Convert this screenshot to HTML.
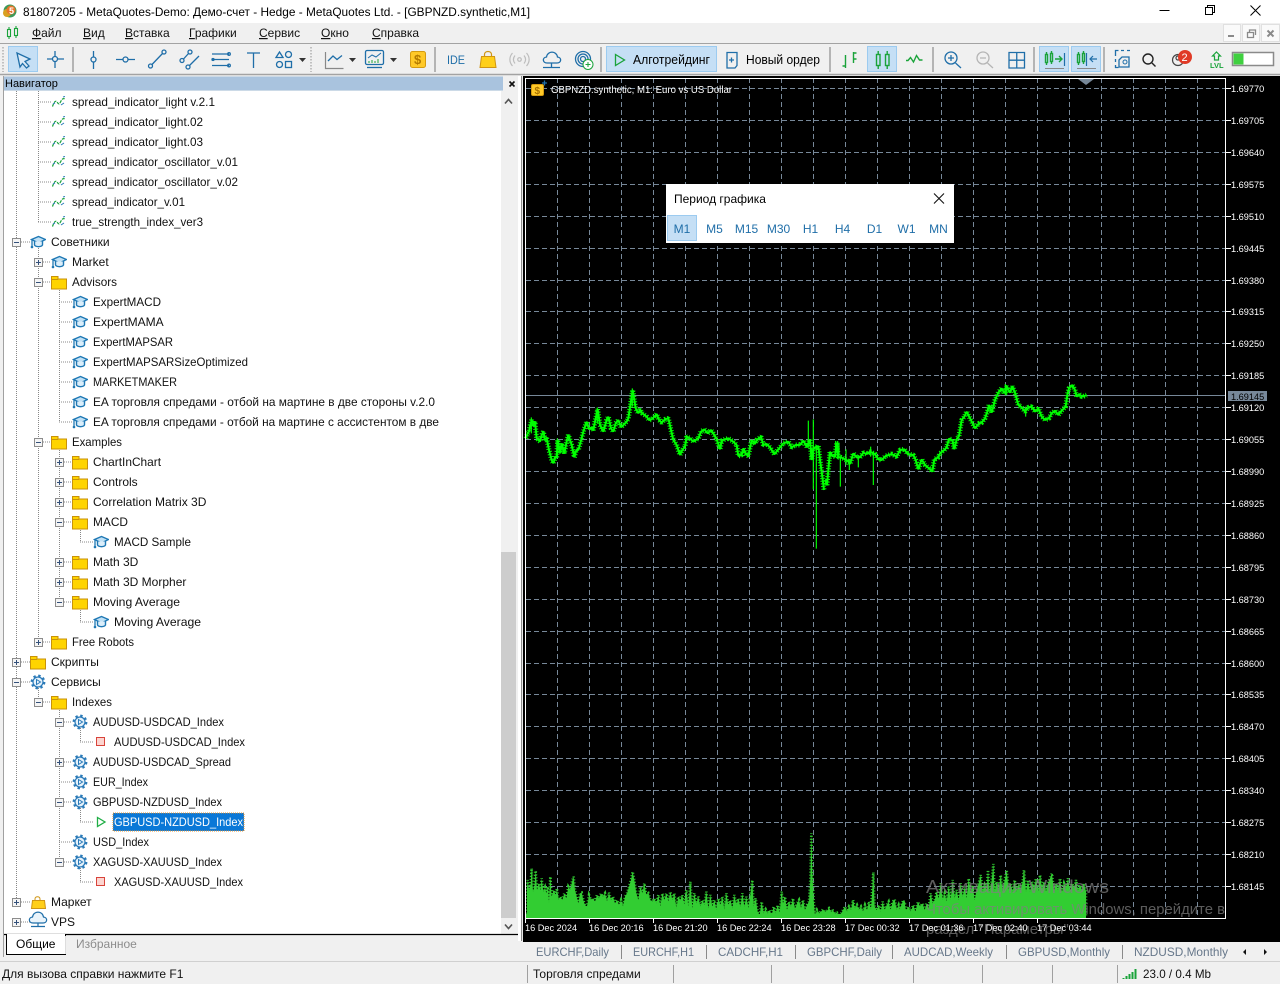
<!DOCTYPE html>
<html><head><meta charset="utf-8"><title>MetaTrader</title>
<style>
html,body{margin:0;padding:0;background:#f0f0f0;width:1280px;height:984px;overflow:hidden}
svg{display:block;font-family:"Liberation Sans","Noto Sans CJK SC",sans-serif;font-size:12px}
.b{fill:none;stroke:#1f6ea8;stroke-width:1.3}
.g{fill:none;stroke:#1aa33a;stroke-width:1.4}
.s{fill:#c5dff5;stroke:#9ccbf0}
.sep{stroke:#a0a0a0;stroke-width:1.5}
.ax text,.ax{fill:#fff;font-size:9.2px}
</style></head><body>
<svg width="1280" height="984" viewBox="0 0 1280 984" xmlns="http://www.w3.org/2000/svg">
<defs>
<symbol id="hat" viewBox="0 0 16 16" width="16" height="16">
<path d="M8.500 2.500 15.500 5.500 8.500 9 1.500 5.500z" fill="#bfe0f5" stroke="#1f78b4" stroke-width="1.400"/>
<path d="M4.500 7.500v3.500c1 2.200 7 2.200 8 0V7.500" fill="#dceefa" stroke="#1f78b4" stroke-width="1.400"/>
<path d="M2 6v6.500" stroke="#1f78b4" stroke-width="1.300"/><circle cx="2" cy="13" r="1.300" fill="#1f78b4"/>
</symbol>
<symbol id="fold" viewBox="0 0 16 15" width="16" height="15">
<path d="M.5 14V1.500h6.500v2.500h8.500V14z" fill="#ffd400" stroke="#c8920a"/><path d="M1 4.500h6" stroke="#c8920a"/>
</symbol>
<symbol id="gear" viewBox="0 0 16 16" width="16" height="16">
<circle cx="8" cy="8" r="6.300" fill="none" stroke="#2a7ab8" stroke-width="2.200" stroke-dasharray="2.400 2.550"/>
<circle cx="8" cy="8" r="5" fill="#e6f2fb" stroke="#2a7ab8" stroke-width="1.200"/>
<path d="M6.500 5.500 10.500 8 6.500 10.500z" fill="none" stroke="#2a7ab8"/>
</symbol>
<symbol id="ind" viewBox="0 0 14 12" width="14" height="12">
<path d="M.5 10.500C2 6 3.500 4 5 6S7 9 8.500 6 11 2 13 3" fill="none" stroke="#1aa33a" stroke-width="1.200" stroke-dasharray="3 1"/>
<path d="M1 8 3 7M9 9 12 7M11 1l2-.5" fill="none" stroke="#2a7ab8"/>
</symbol>
<symbol id="plus" viewBox="0 0 9 9" width="9" height="9">
<rect x=".5" y=".5" width="8" height="8" fill="#f4f4f4" stroke="#8c8c8c"/><path d="M2 4.500h5M4.500 2v5" stroke="#33507a"/>
</symbol>
<symbol id="minus" viewBox="0 0 9 9" width="9" height="9">
<rect x=".5" y=".5" width="8" height="8" fill="#f4f4f4" stroke="#8c8c8c"/><path d="M2 4.500h5" stroke="#33507a"/>
</symbol>
<symbol id="arr" viewBox="0 0 7 4" width="7" height="4"><path d="M0 0h7L3.500 4z" fill="#333"/></symbol>
<polyline id="p1" points="3,205 8,190 12,185 16,165 20,150 25,168 30,155 35,205 45,215 50,195 55,185 60,208 65,205 72,240 80,270 85,280 92,258 95,265 98,210 105,250 110,220 118,250 125,215 130,195 140,225 148,262 154,240 160,240 170,205 175,185 185,155 192,178 200,172 205,180 210,155 218,118 225,165 235,185 245,150 250,140 258,175 265,185 272,160 280,150 288,172 295,165 305,155 310,145 317,100 323,60 328,90 332,115 340,130 345,118 352,130 365,140 372,150 380,148 388,140 395,132 402,150 410,158 420,148 430,145 438,180 445,210 455,225 465,255 472,240 480,230 485,200 495,205 505,215 520,205 528,185 538,178 548,190 558,180 565,190 575,208 585,238 590,212 600,208 610,205 625,215 635,225 640,258 650,255 655,235 663,252 670,258 680,210 690,222 695,210 708,200 715,225 725,222 735,232 748,253 760,238 775,220 790,215 800,232 812,225 825,225 835,212 845,230 855,210 860,270 864,240 870,232 880,228 885,270 892,320 897,360"/>
<polyline id="p2" points="0,330 6,345 10,300 15,245 22,258 30,260 35,218 40,262 48,262 60,268 68,272 75,282 85,250 95,262 105,262 115,248 125,252 135,245 150,252 160,268 170,270 182,258 200,252 215,260 225,240 238,238 248,252 265,255 272,270 280,298 290,268 300,285 312,295 322,305 328,268 340,262 345,250 358,240 365,232 372,206 382,210 388,238 395,208 402,198 410,150 418,140 425,125 435,145 450,175 462,160 470,158 480,145 487,125 492,105 500,128 510,90 520,68 530,55 538,70 545,50 555,68 562,50 570,68 580,105 590,112 600,125 610,112 620,110 630,125 640,115 650,140 660,150 672,145 680,130 690,122 700,135 710,122 722,110 727,75 732,55 742,45 750,60 755,80 762,72 770,80 778,78 785,75"/>
</defs>

<!-- base -->
<rect width="1280" height="984" fill="#f0f0f0"/>
<rect width="1280" height="23" fill="#fff"/>

<!-- title bar -->
<circle cx="10" cy="11" r="6.500" fill="#3d9a5a"/><circle cx="7" cy="13" r="4" fill="#d9a020"/><circle cx="11" cy="10" r="4.500" fill="#e8742a"/><text x="9" y="14" font-size="9" font-weight="bold" fill="#fff">5</text>
<text x="23" y="16" textLength="507" lengthAdjust="spacingAndGlyphs">81807205 - MetaQuotes-Demo: Демо-счет - Hedge - MetaQuotes Ltd. - [GBPNZD.synthetic,M1]</text>
<path d="M1159.500 10.500h10" stroke="#000"/>
<path d="M1205.500 7.500h7v7h-7zM1207.500 7.500v-2h7v7h-2" fill="none" stroke="#000"/>
<path d="M1250.500 5.500l10 10M1260.500 5.500l-10 10" stroke="#000"/>

<!-- menu -->
<g fill="none" stroke="#1aa33a" stroke-width="1.100"><rect x="7.500" y="29.500" width="3" height="7"/><rect x="14.500" y="28.500" width="3" height="7"/><path d="M9 27v2.500M9 36.500V39M16 26v2.500M16 35.500V38"/></g>
<g fill="#111">
<text x="32" y="37"><tspan text-decoration="underline">Ф</tspan>айл</text>
<text x="83" y="37"><tspan text-decoration="underline">В</tspan>ид</text>
<text x="125" y="37"><tspan text-decoration="underline">В</tspan>ставка</text>
<text x="189" y="37"><tspan text-decoration="underline">Г</tspan>рафики</text>
<text x="259" y="37"><tspan text-decoration="underline">С</tspan>ервис</text>
<text x="321" y="37"><tspan text-decoration="underline">О</tspan>кно</text>
<text x="372" y="37"><tspan text-decoration="underline">С</tspan>правка</text>
</g>
<g fill="#fafafa" stroke="#e0e0e0"><rect x="1223.500" y="24.500" width="17" height="17"/><rect x="1242.500" y="24.500" width="17" height="17"/><rect x="1261.500" y="24.500" width="18" height="17"/></g>
<path d="M1228 36h6" stroke="#8a8a8a" stroke-width="2"/>
<path d="M1247.500 32.500h6v5h-6zM1249.500 32v-2h6v5" fill="none" stroke="#8a8a8a" stroke-width="1.300"/>
<path d="M1267.500 30.500l6 6M1273.500 30.500l-6 6" stroke="#8a8a8a" stroke-width="2"/>

<!-- toolbar -->
<path d="M0 43.500h1280" stroke="#a3a3a3"/><path d="M0 74.500h1280" stroke="#a3a3a3" stroke-width="1.500"/>
<path d="M3 47v25M311 47v25" stroke="#c0c0c0" stroke-width="2" stroke-dasharray="1.500 1.500"/>
<rect class="s" x="8.500" y="46.500" width="29" height="25"/>
<path d="M17 53 30 59 25 61.500 29 66 26.500 68 22.500 63.500 20 67z" fill="#dbeaf7" stroke="#1f6ea8" stroke-width="1.300"/>
<g class="b"><path d="M47 59h5.500M57.500 59H64M55 51v5.500M55 61.500V68"/><circle cx="55" cy="59" r="2.500"/></g>
<path class="sep" d="M73 47v25"/>
<g class="b"><path d="M93.500 51v5.500M93.500 61.500V69"/><circle cx="93.500" cy="59.500" r="2.500"/>
<path d="M116 59.500h7M128.500 59.500H135"/><circle cx="125.500" cy="59.500" r="2.500"/>
<circle cx="150.500" cy="66" r="2"/><circle cx="164" cy="52" r="2"/><path d="M152 64.500 162.500 53.500"/>
<circle cx="182" cy="60.500" r="2"/><circle cx="190" cy="52" r="2"/><circle cx="188" cy="67" r="2"/><path d="M183.500 59 188.500 53.500M189.500 65.500 199 56"/>
<path d="M212 54h17M212 59.500h17M212 65.500h17"/><circle cx="229" cy="54" r="1.300"/><circle cx="213" cy="59.500" r="1"/><circle cx="229" cy="65.500" r="1.300"/>
<path d="M247 53h13M253.500 53v15"/>
<path d="M276 57.500 279.500 52 283 57.500z"/><circle cx="288.500" cy="54.500" r="3"/><circle cx="279.500" cy="64.500" r="3"/><rect x="285.500" y="61.500" width="6" height="6"/></g>
<use href="#arr" x="299" y="58"/>
<path d="M325.500 52v16.500h18" fill="none" stroke="#888" stroke-width="1.200"/>
<path class="b" d="M328 61 333 56 337 59.500 342 55.500"/>
<use href="#arr" x="349" y="58"/>
<rect class="b" x="365.500" y="50.500" width="18" height="14" rx="1.500"/><path class="b" d="M367 67.500h15"/>
<path d="M368 58l4-3 4 2 5-4" fill="none" stroke="#1f6ea8"/><path d="M369 63v-2M372 63v-3M375 63v-2M378 63v-4" stroke="#1aa33a"/>
<use href="#arr" x="390" y="58"/>
<rect x="410.500" y="51.500" width="15" height="16" rx="2" fill="#ffc928" stroke="#d49b10"/><text x="414" y="64" font-size="13" font-weight="bold" fill="#b37a00">$</text>
<path class="sep" d="M435 47v25"/>
<text x="447" y="64" fill="#1f6ea8" font-size="12" textLength="18" lengthAdjust="spacingAndGlyphs">IDE</text>
<path d="M481.500 56.500h13l1.500 11h-16z" fill="#ffcf1a" stroke="#cf9514"/><path d="M484.500 57v-2.500c0-4 7-4 7 0V57" fill="none" stroke="#cf9514" stroke-width="1.200"/>
<g fill="none" stroke="#bdbdbd" stroke-width="1.200"><circle cx="519.500" cy="59.500" r="1.800"/><path d="M515 55.500c-2 2.500-2 5.500 0 8M524 55.500c2 2.500 2 5.500 0 8M512.500 53c-3.500 4-3.500 9 0 13M526.500 53c3.500 4 3.500 9 0 13"/></g>
<path class="b" d="M547 63c-4.500 0-5-5.500-.5-6 1-6.500 10-6.500 11 0 4.500.5 4 6-.5 6zM551.500 63v4M543 67.500h17"/>
<g class="b"><circle cx="583" cy="59" r="7.500"/><circle cx="583" cy="59" r="5"/><circle cx="583" cy="59" r="2.500"/></g><circle cx="588" cy="64.500" r="5" fill="#fff" stroke="#1aa33a"/><path d="M585.500 64.500h5M588 62v5" stroke="#1aa33a"/>
<path class="sep" d="M601 47v25"/>
<rect class="s" x="606.500" y="46.500" width="110" height="25"/>
<path d="M615.500 54.500 624.500 60 615.500 65.500z" fill="none" stroke="#1aa33a" stroke-width="1.300"/>
<text x="633" y="64" font-size="12.500" textLength="77" lengthAdjust="spacingAndGlyphs">Алготрейдинг</text>
<path class="b" d="M727 52.500h10v13l-2 2.500h-8z" stroke-width="1.500"/><path class="b" d="M729 60h5M731.500 57.500v5"/>
<text x="746" y="64" font-size="12.500" textLength="74" lengthAdjust="spacingAndGlyphs">Новый ордер</text>
<path class="sep" d="M830 47v25"/>
<path class="g" d="M842.500 66h3M845.500 55v13M853.500 59h3M853.500 52v11M853.500 53h3"/>
<rect class="s" x="867.500" y="46.500" width="29" height="25"/>
<g class="g" stroke-width="1.300"><rect x="876.500" y="54.500" width="3.500" height="11"/><rect x="885.500" y="54.500" width="3.500" height="11"/><path d="M878.200 51v3.500M878.200 65.500V69M887.200 51v3.500M887.200 65.500V69"/></g>
<path class="g" d="M906 60.500h2l2.500-3 3 4.500 3-6.500 3 4.500h3"/>
<path class="sep" d="M933 47v25"/>
<g class="b"><circle cx="951" cy="58" r="6"/><path d="M955.500 63 961 68M948 58h6M951 55v6"/></g>
<g fill="none" stroke="#b5b5b5" stroke-width="1.300"><circle cx="983" cy="58" r="6"/><path d="M987.500 63 993 68M980 58h6"/></g>
<path class="b" d="M1009 52.500h15.500v15.500H1009zM1016.750 52.500v15.500M1009 60.200h15.500" stroke-width="1.500" fill="#e8f2fa"/>
<path class="sep" d="M1034 47v25"/>
<rect class="s" x="1039.500" y="46.500" width="29" height="25"/><rect class="s" x="1071.500" y="46.500" width="29" height="25"/>
<g class="g" stroke-width="1"><rect x="1045.500" y="54.500" width="2" height="8"/><rect x="1050.500" y="53.500" width="2" height="8"/><path d="M1046.500 52v2.500M1046.500 62.500V65M1051.500 51v2.500M1051.500 61.500V64M1055 59h7M1059 56l3 3-3 3"/>
<rect x="1077.500" y="54.500" width="2" height="8"/><rect x="1082.500" y="53.500" width="2" height="8"/><path d="M1078.500 52v2.500M1078.500 62.500V65M1083.500 51v2.500M1083.500 61.500V64"/></g>
<path d="M1064.500 53v13M1086.500 53v13M1097 59h-7M1093 56l-3 3 3 3" fill="none" stroke="#1f6ea8" stroke-width="1.200"/>
<path d="M1045 68.500h19M1077 68.500h19" stroke="#8a8a8a"/>
<path class="sep" d="M1104 47v25"/>
<path d="M1115.500 56v-5.500h3M1121 50.500h3M1127 50.500h3M1115.500 59v3M1115.500 65v2.500h3" fill="none" stroke="#1f6ea8" stroke-width="1.300"/>
<path class="b" d="M1119 60l3-3h7v10h-10z" fill="#dbeaf7"/><circle cx="1125" cy="62" r="2" fill="none" stroke="#1f6ea8"/>
<g fill="none" stroke="#222" stroke-width="1.400"><circle cx="1148" cy="59" r="5"/><path d="M1152 63l3.500 3.500"/></g>
<g fill="none" stroke="#444" stroke-width="1.200"><circle cx="1178" cy="60" r="5.500"/><circle cx="1178" cy="58" r="2"/></g>
<circle cx="1185" cy="57" r="7" fill="#e03a26"/><text x="1181.500" y="61" font-size="11" fill="#fff">2</text>
<path d="M1216.500 52l4 4h-2v4h-4v-4h-2z" fill="none" stroke="#1aa33a" stroke-width="1.200"/><text x="1210" y="68" font-size="7.500" font-weight="bold" fill="#1aa33a">LVL</text>
<rect x="1232.500" y="52.500" width="41" height="13" fill="#fff" stroke="#8a8a8a" stroke-width="1.500"/><rect x="1233.500" y="53.500" width="10" height="11" fill="#3fd03f"/>

<!-- navigator panel -->
<rect x="3" y="76" width="515" height="881" fill="#f0f0f0"/>
<rect x="3" y="76.500" width="500" height="14" fill="#a9c3de"/>
<text x="5" y="87" font-size="11">Навигатор</text>
<path d="M509.500 81.500l5 5M514.500 81.500l-5 5" stroke="#111" stroke-width="1.600"/>
<rect x="4" y="91" width="497" height="843" fill="#fff"/>
<path d="M3.500 76v881" stroke="#a0a0a0"/>
<rect x="501" y="91" width="17" height="843" fill="#f0f0f0"/>
<rect x="501" y="552" width="15" height="366" fill="#cdcdcd"/>
<path d="M505 103.500l3.500-4 3.500 4" fill="none" stroke="#555" stroke-width="1.600"/>
<path d="M505 924.500l3.500 4 3.500-4" fill="none" stroke="#555" stroke-width="1.600"/>

<!-- tree dotted -->
<g fill="none" stroke="#888" stroke-dasharray="1 1">
<path d="M16.500 91V902M38.500 91V222M38.500 242V642M38.500 682V702M59.500 282V422M59.500 442V602M59.500 702V862M80.500 522V542M80.500 602V622M80.500 722V742M80.500 802V822M80.500 862V882"/>
<path d="M38 102h14M38 122h14M38 142h14M38 162h14M38 182h14M38 202h14M38 222h14M21 242h10M43 262h7M43 282h7M59 302h14M59 322h14M59 342h14M59 362h14M59 382h14M59 402h14M59 422h14M43 442h7M64 462h7M64 482h7M64 502h7M64 522h7M80 542h13M64 562h7M64 582h7M64 602h7M80 622h13M43 642h7M21 662h10M21 682h10M43 702h7M64 722h7M80 742h13M64 762h7M59 782h13M64 802h7M80 822h13M59 842h13M64 862h7M80 882h13M21 902h10M21 922h10"/>
</g>
<!-- tree expanders -->
<use href="#minus" x="12" y="238"/><use href="#plus" x="34" y="258"/><use href="#minus" x="34" y="278"/><use href="#minus" x="34" y="438"/>
<use href="#plus" x="55" y="458"/><use href="#plus" x="55" y="478"/><use href="#plus" x="55" y="498"/><use href="#minus" x="55" y="518"/><use href="#plus" x="55" y="558"/><use href="#plus" x="55" y="578"/><use href="#minus" x="55" y="598"/>
<use href="#plus" x="34" y="638"/><use href="#plus" x="12" y="658"/><use href="#minus" x="12" y="678"/><use href="#minus" x="34" y="698"/>
<use href="#minus" x="55" y="718"/><use href="#plus" x="55" y="758"/><use href="#minus" x="55" y="798"/><use href="#minus" x="55" y="858"/>
<use href="#plus" x="12" y="898"/><use href="#plus" x="12" y="918"/>
<!-- tree icons -->
<use href="#ind" x="52" y="96"/><use href="#ind" x="52" y="116"/><use href="#ind" x="52" y="136"/><use href="#ind" x="52" y="156"/><use href="#ind" x="52" y="176"/><use href="#ind" x="52" y="196"/><use href="#ind" x="52" y="216"/>
<use href="#hat" x="30" y="234"/><use href="#hat" x="51" y="254"/><use href="#fold" x="51" y="275"/>
<use href="#hat" x="72" y="294"/><use href="#hat" x="72" y="314"/><use href="#hat" x="72" y="334"/><use href="#hat" x="72" y="354"/><use href="#hat" x="72" y="374"/><use href="#hat" x="72" y="394"/><use href="#hat" x="72" y="414"/>
<use href="#fold" x="51" y="435"/><use href="#fold" x="72" y="455"/><use href="#fold" x="72" y="475"/><use href="#fold" x="72" y="495"/><use href="#fold" x="72" y="515"/><use href="#hat" x="93" y="534"/><use href="#fold" x="72" y="555"/><use href="#fold" x="72" y="575"/><use href="#fold" x="72" y="595"/><use href="#hat" x="93" y="614"/><use href="#fold" x="51" y="635"/>
<use href="#fold" x="30" y="655"/>
<use href="#gear" x="30" y="674"/><use href="#fold" x="51" y="695"/><use href="#gear" x="72" y="714"/>
<rect x="96.500" y="737.500" width="8" height="8" fill="#fcd5d0" stroke="#d8433a"/>
<use href="#gear" x="72" y="754"/><use href="#gear" x="72" y="774"/><use href="#gear" x="72" y="794"/>
<path d="M97.500 817.500 105 822 97.500 826.500z" fill="none" stroke="#1fae45" stroke-width="1.300"/>
<use href="#gear" x="72" y="834"/><use href="#gear" x="72" y="854"/>
<rect x="96.500" y="877.500" width="8" height="8" fill="#fcd5d0" stroke="#d8433a"/>
<path d="M32.500 900.500h12l1 8h-14z" fill="#ffcf1a" stroke="#cf9514"/><path d="M35 901v-2c0-3 5-3 5 0v2" fill="none" stroke="#cf9514"/>
<path d="M33 923c-4.500 0-5-5.500-.5-6 1-6.500 10-6.500 11 0 4.500.5 4 6-.5 6zM38 923v3.500M31 926.500h14" fill="#eaf4fb" stroke="#1f6ea8" stroke-width="1.200"/>
<rect x="113" y="813" width="131" height="18" fill="#0a78d7" stroke="#e09030" stroke-dasharray="1 1"/>
<!-- tree text -->
<g fill="#111" lengthAdjust="spacingAndGlyphs">
<text x="72" y="106" lengthAdjust="spacingAndGlyphs" textLength="143">spread_indicator_light v.2.1</text>
<text x="72" y="126" lengthAdjust="spacingAndGlyphs" textLength="131">spread_indicator_light.02</text>
<text x="72" y="146" lengthAdjust="spacingAndGlyphs" textLength="131">spread_indicator_light.03</text>
<text x="72" y="166" lengthAdjust="spacingAndGlyphs" textLength="166">spread_indicator_oscillator_v.01</text>
<text x="72" y="186" lengthAdjust="spacingAndGlyphs" textLength="166">spread_indicator_oscillator_v.02</text>
<text x="72" y="206" lengthAdjust="spacingAndGlyphs" textLength="113">spread_indicator_v.01</text>
<text x="72" y="226" lengthAdjust="spacingAndGlyphs" textLength="131">true_strength_index_ver3</text>
<text x="51" y="246">Советники</text>
<text x="72" y="266">Market</text>
<text x="72" y="286" lengthAdjust="spacingAndGlyphs" textLength="45">Advisors</text>
<text x="93" y="306" lengthAdjust="spacingAndGlyphs" textLength="68">ExpertMACD</text>
<text x="93" y="326">ExpertMAMA</text>
<text x="93" y="346" lengthAdjust="spacingAndGlyphs" textLength="80">ExpertMAPSAR</text>
<text x="93" y="366" lengthAdjust="spacingAndGlyphs" textLength="155">ExpertMAPSARSizeOptimized</text>
<text x="93" y="386" lengthAdjust="spacingAndGlyphs" textLength="84">MARKETMAKER</text>
<text x="93" y="406" lengthAdjust="spacingAndGlyphs" textLength="342">EA торговля спредами - отбой на мартине в две стороны v.2.0</text>
<text x="93" y="426" lengthAdjust="spacingAndGlyphs" textLength="346">EA торговля спредами - отбой на мартине с ассистентом в две</text>
<text x="72" y="446" lengthAdjust="spacingAndGlyphs" textLength="50">Examples</text>
<text x="93" y="466" lengthAdjust="spacingAndGlyphs" textLength="68">ChartInChart</text>
<text x="93" y="486">Controls</text>
<text x="93" y="506">Correlation Matrix 3D</text>
<text x="93" y="526" lengthAdjust="spacingAndGlyphs" textLength="35">MACD</text>
<text x="114" y="546" lengthAdjust="spacingAndGlyphs" textLength="77">MACD Sample</text>
<text x="93" y="566">Math 3D</text>
<text x="93" y="586">Math 3D Morpher</text>
<text x="93" y="606" lengthAdjust="spacingAndGlyphs" textLength="87">Moving Average</text>
<text x="114" y="626" lengthAdjust="spacingAndGlyphs" textLength="87">Moving Average</text>
<text x="72" y="646" lengthAdjust="spacingAndGlyphs" textLength="62">Free Robots</text>
<text x="51" y="666">Скрипты</text>
<text x="51" y="686">Сервисы</text>
<text x="72" y="706" lengthAdjust="spacingAndGlyphs" textLength="40">Indexes</text>
<text x="93" y="726" lengthAdjust="spacingAndGlyphs" textLength="131">AUDUSD-USDCAD_Index</text>
<text x="114" y="746" lengthAdjust="spacingAndGlyphs" textLength="131">AUDUSD-USDCAD_Index</text>
<text x="93" y="766" lengthAdjust="spacingAndGlyphs" textLength="138">AUDUSD-USDCAD_Spread</text>
<text x="93" y="786" lengthAdjust="spacingAndGlyphs" textLength="55">EUR_Index</text>
<text x="93" y="806" lengthAdjust="spacingAndGlyphs" textLength="129">GBPUSD-NZDUSD_Index</text>
<text x="114" y="826" fill="#fff" lengthAdjust="spacingAndGlyphs" textLength="129">GBPUSD-NZDUSD_Index</text>
<text x="93" y="846" lengthAdjust="spacingAndGlyphs" textLength="56">USD_Index</text>
<text x="93" y="866" lengthAdjust="spacingAndGlyphs" textLength="129">XAGUSD-XAUUSD_Index</text>
<text x="114" y="886" lengthAdjust="spacingAndGlyphs" textLength="129">XAGUSD-XAUUSD_Index</text>
<text x="51" y="906">Маркет</text>
<text x="51" y="926">VPS</text>
</g>
<!-- nav tabs -->
<path d="M4 934.500h514" stroke="#000" stroke-width="1.300"/>
<path d="M6.500 934v20.500h59V934" fill="#fff" stroke="#000"/>
<text x="16" y="948">Общие</text>
<text x="76" y="948" fill="#8c8c8c">Избранное</text>
<path d="M65.500 936v18" stroke="#ddd"/>

<!-- chart -->
<rect x="518" y="76" width="3" height="865" fill="#fff"/>
<rect x="521" y="76" width="1" height="865" fill="#8a8a8a"/>
<rect x="522" y="76" width="1" height="865" fill="#e8e8e8"/>
<rect x="523" y="76" width="757" height="865" fill="#000"/>
<path d="M523 941.500h757" stroke="#000"/>
<g fill="none" stroke="#778899" stroke-dasharray="5 3">
<path d="M526 88.500H1226M526 120.500H1226M526 152.500H1226M526 184.500H1226M526 216.500H1226M526 248.500H1226M526 280.500H1226M526 311.500H1226M526 343.500H1226M526 375.500H1226M526 407.500H1226M526 439.500H1226M526 471.500H1226M526 503.500H1226M526 535.500H1226M526 567.500H1226M526 599.500H1226M526 631.500H1226M526 663.500H1226M526 694.500H1226M526 726.500H1226M526 758.500H1226M526 790.500H1226M526 822.500H1226M526 854.500H1226M526 886.500H1226"/>
<path d="M557.500 78V918M589.500 78V918M621.500 78V918M653.500 78V918M685.500 78V918M717.500 78V918M749.500 78V918M781.500 78V918M813.500 78V918M845.500 78V918M877.500 78V918M909.500 78V918M941.500 78V918M973.500 78V918M1005.500 78V918M1037.500 78V918M1069.500 78V918M1101.500 78V918M1133.500 78V918M1165.500 78V918M1197.500 78V918"/>
</g>
<path d="M526 395.500H1226" stroke="#778899"/>
<!-- volume -->
<g transform="translate(525 850) scale(.33333)" fill="#32cd32" stroke="#32cd32" stroke-width="8" stroke-dasharray="3 6">
<polygon points="6,200 6,115 8,90 12,120 17,100 20,55 24,125 28,110 32,62 36,120 42,100 46,122 50,85 55,125 60,112 64,130 68,110 72,158 76,80 80,140 86,120 92,135 96,115 100,150 106,140 112,150 118,130 124,145 130,110 136,120 141,95 146,80 150,120 155,140 160,160 165,130 170,128 175,150 180,165 186,170 192,135 198,150 204,145 210,155 216,135 222,145 228,130 234,140 240,130 246,155 252,128 258,150 264,140 270,160 276,150 282,165 288,150 294,170 300,140 306,130 312,110 318,90 323,65 328,90 334,130 340,150 346,110 352,130 358,100 364,135 370,130 376,150 382,155 388,145 394,160 400,135 406,170 412,130 418,150 424,130 430,155 436,125 442,150 448,130 454,175 460,140 466,150 472,135 478,165 484,120 490,170 496,95 502,175 508,130 514,160 520,140 526,170 532,150 538,165 544,125 550,175 556,135 562,170 568,150 574,180 580,145 586,165 592,140 598,180 604,130 610,165 616,150 622,175 628,135 634,165 640,145 646,170 652,130 658,170 664,140 670,175 676,135 682,90 686,170 692,145 698,185 704,195 710,155 716,190 722,178 728,190 734,180 740,195 746,170 752,190 758,165 764,188 770,125 774,160 780,140 786,180 792,155 798,170 804,145 810,180 816,160 822,150 828,175 834,150 840,180 846,165 852,155 856,90 859,-50 862,65 866,150 870,200 876,180 882,190 888,185 894,178 900,185 906,182 912,175 918,185 924,182 930,190 936,188 942,195 948,192 954,180 960,170 966,185 972,170 978,180 984,150 990,175 996,165 1002,180 1008,170 1014,185 1020,165 1026,180 1032,155 1038,178 1045,67 1049,170 1055,180 1061,165 1067,185 1073,155 1079,180 1085,165 1091,155 1097,180 1103,155 1109,148 1115,180 1121,165 1127,185 1133,160 1140,155 1140,200"/>
</g>
<g transform="translate(900 850) scale(.33333)" fill="#32cd32" stroke="#32cd32" stroke-width="8" stroke-dasharray="3 6">
<polygon points="0,200 0,175 10,150 18,180 26,170 32,185 40,165 46,185 54,155 60,170 68,160 74,180 80,160 86,175 92,130 98,160 104,150 110,125 116,145 122,100 128,150 134,130 140,155 146,110 152,150 158,90 164,145 170,120 176,150 182,100 188,140 194,110 200,145 206,85 212,130 218,105 224,150 230,120 236,100 242,75 248,125 254,105 260,120 264,60 268,125 274,100 280,42 284,125 290,95 296,120 302,75 308,125 314,90 320,60 326,120 332,100 338,125 344,90 350,125 356,100 362,120 368,95 372,60 378,125 384,90 390,125 396,95 402,115 408,85 414,125 420,75 426,115 432,95 438,125 444,100 450,85 456,70 462,125 468,100 474,120 480,85 486,125 492,100 498,115 504,85 510,125 516,100 522,115 528,90 534,120 540,105 546,120 552,100 558,125 558,200"/>
</g>
<rect x="526" y="914" width="560" height="4" fill="#32cd32"/>
<!-- price -->
<g transform="translate(525 370) scale(.33333)" fill="none" stroke="#00ff00" stroke-linejoin="bevel">
<use href="#p1" stroke-width="6"/>
<use href="#p1" stroke-width="15" stroke-dasharray="3 5"/>
</g>
<g transform="translate(525 370) scale(.33333)" stroke="#00ff00" stroke-width="3.500">
<path d="M850 152V232M865 148V358M874 225V536M19 142V190M97 205V260M322 55V110M217 112V160"/>
</g>
<g transform="translate(825 370) scale(.33333)" fill="none" stroke="#00ff00" stroke-linejoin="bevel">
<use href="#p2" stroke-width="6"/>
<use href="#p2" stroke-width="15" stroke-dasharray="3 5"/>
</g>
<g transform="translate(825 370) scale(.33333)" stroke="#00ff00" stroke-width="3.500">
<path d="M46 262V350M145 245V345M137 230V260M63 238V285M73 270V300M100 262V292M32 213V262M38 213V262M42 218V262M602 110V140M545 45V75M541 42V76"/>
</g>
<!-- frame -->
<path d="M525.500 78.500H1225.500V918.500H525.500z" fill="none" stroke="#fff"/>
<path d="M1078 79h16l-8 6z" fill="#778899"/>
<path d="M1226 88.500h5M1226 120.500h5M1226 152.500h5M1226 184.500h5M1226 216.500h5M1226 248.500h5M1226 280.500h5M1226 311.500h5M1226 343.500h5M1226 375.500h5M1226 407.500h5M1226 439.500h5M1226 471.500h5M1226 503.500h5M1226 535.500h5M1226 567.500h5M1226 599.500h5M1226 631.500h5M1226 663.500h5M1226 694.500h5M1226 726.500h5M1226 758.500h5M1226 790.500h5M1226 822.500h5M1226 854.500h5M1226 886.500h5M525.500 918v5M589.500 918v5M653.500 918v5M717.500 918v5M781.500 918v5M845.500 918v5M909.500 918v5M973.500 918v5M1037.500 918v5" stroke="#fff"/>
<!-- watermark -->
<g fill="#808080" fill-opacity=".72">
<text x="926" y="893" font-size="18.500" textLength="183" lengthAdjust="spacingAndGlyphs">Активация Windows</text>
<svg x="0" y="0" width="1226" height="984" style="overflow:hidden"><text x="926" y="914" font-size="14.500" textLength="299" lengthAdjust="spacingAndGlyphs">Чтобы активировать Windows, перейдите в</text></svg>
<text x="926" y="934" font-size="14.500" textLength="147" lengthAdjust="spacingAndGlyphs">раздел "Параметры".</text>
</g>
<!-- axis labels -->
<g class="ax">
<text x="1231" y="92">1.69770</text><text x="1231" y="124">1.69705</text><text x="1231" y="156">1.69640</text><text x="1231" y="188">1.69575</text><text x="1231" y="220">1.69510</text><text x="1231" y="252">1.69445</text><text x="1231" y="284">1.69380</text><text x="1231" y="315">1.69315</text><text x="1231" y="347">1.69250</text><text x="1231" y="379">1.69185</text><text x="1231" y="411">1.69120</text><text x="1231" y="443">1.69055</text><text x="1231" y="475">1.68990</text><text x="1231" y="507">1.68925</text><text x="1231" y="539">1.68860</text><text x="1231" y="571">1.68795</text><text x="1231" y="603">1.68730</text><text x="1231" y="635">1.68665</text><text x="1231" y="667">1.68600</text><text x="1231" y="698">1.68535</text><text x="1231" y="730">1.68470</text><text x="1231" y="762">1.68405</text><text x="1231" y="794">1.68340</text><text x="1231" y="826">1.68275</text><text x="1231" y="858">1.68210</text><text x="1231" y="890">1.68145</text>
<text x="525" y="931">16 Dec 2024</text><text x="589" y="931">16 Dec 20:16</text><text x="653" y="931">16 Dec 21:20</text><text x="717" y="931">16 Dec 22:24</text><text x="781" y="931">16 Dec 23:28</text><text x="845" y="931">17 Dec 00:32</text><text x="909" y="931">17 Dec 01:36</text><text x="973" y="931">17 Dec 02:40</text><text x="1037" y="931">17 Dec 03:44</text>
</g>
<rect x="1228" y="391" width="39" height="10" fill="#778899"/>
<text x="1231" y="400" font-size="9.200" fill="#000">1.69145</text>
<!-- chart title -->
<rect x="531.500" y="84.500" width="12" height="11" rx="1.500" fill="#ffc928" stroke="#d49b10"/>
<text x="534.500" y="94" font-size="10" font-weight="bold" fill="#a87200">$</text>
<path d="M542 83h5M544.500 80.500v5" stroke="#1f6ea8" stroke-width="1.300"/>
<text x="551" y="93" font-size="9.800" fill="#fff" textLength="181" lengthAdjust="spacingAndGlyphs">GBPNZD.synthetic, M1:  Euro vs US Dollar</text>

<!-- period dialog -->
<rect x="666" y="184" width="288" height="59" fill="#fff"/>
<text x="674" y="203">Период графика</text>
<path d="M934 193.500l10 10M944 193.500l-10 10" stroke="#111" stroke-width="1.100"/>
<rect class="s" x="667.500" y="215.500" width="29" height="25" fill="#cce4f7"/>
<g fill="#1f6ea8" text-anchor="middle">
<text x="682" y="233">M1</text><text x="714.500" y="233">M5</text><text x="746.500" y="233">M15</text><text x="778.500" y="233">M30</text><text x="810.500" y="233">H1</text><text x="842.500" y="233">H4</text><text x="874.500" y="233">D1</text><text x="906.500" y="233">W1</text><text x="938.500" y="233">MN</text>
</g>

<!-- chart tabs -->
<rect x="523" y="942" width="757" height="19" fill="#f0f0f0"/>
<g fill="#66778a">
<text x="536" y="956" textLength="73" lengthAdjust="spacingAndGlyphs">EURCHF,Daily</text><text x="633" y="956" textLength="61" lengthAdjust="spacingAndGlyphs">EURCHF,H1</text><text x="718" y="956" textLength="65" lengthAdjust="spacingAndGlyphs">CADCHF,H1</text><text x="807" y="956" textLength="75" lengthAdjust="spacingAndGlyphs">GBPCHF,Daily</text><text x="904" y="956" textLength="89" lengthAdjust="spacingAndGlyphs">AUDCAD,Weekly</text><text x="1018" y="956" textLength="92" lengthAdjust="spacingAndGlyphs">GBPUSD,Monthly</text><text x="1134" y="956" textLength="94" lengthAdjust="spacingAndGlyphs">NZDUSD,Monthly</text>
</g>
<path d="M621.500 945v14M706.500 945v14M795.500 945v14M892.500 945v14M1006.500 945v14M1122.500 945v14" stroke="#8a8a8a"/>
<path d="M1246 949v6l-3-3zM1264 949v6l3-3z" fill="#111"/>

<!-- status bar -->
<path d="M0 961.500h1280" stroke="#d0d0d0"/>
<text x="2" y="978" fill="#111">Для вызова справки нажмите F1</text>
<text x="533" y="978" fill="#111">Торговля спредами</text>
<path d="M527.500 965v18M673.500 965v18M771.500 965v18M843.500 965v18M913.500 965v18M982.500 965v18M1052.500 965v18M1117.500 965v18" stroke="#a0a0a0"/>
<path d="M1123.500 979v-1M1126.500 979v-3M1129.500 979v-5M1132.500 979v-7M1135.500 979v-10" stroke="#1aa33a" stroke-width="2"/>
<text x="1143" y="978" fill="#111" textLength="68" lengthAdjust="spacingAndGlyphs">23.0 / 0.4 Mb</text>
</svg>
</body></html>
